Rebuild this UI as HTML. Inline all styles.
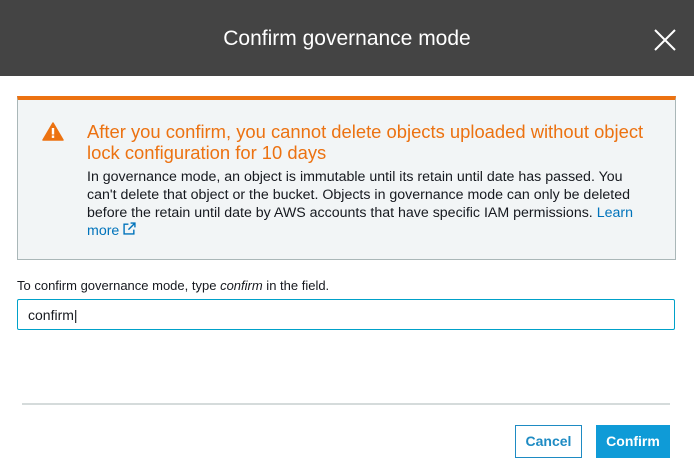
<!DOCTYPE html>
<html><head><style>
*{margin:0;padding:0;box-sizing:border-box}
body{width:694px;height:476px;background:#fff;font-family:"Liberation Sans",Arial,sans-serif;position:relative;overflow:hidden}
.hd{position:absolute;left:0;top:0;width:694px;height:76px;background:#444444;color:#fff;font-size:21px;text-align:center;line-height:78px}
.x{position:absolute;right:18px;top:29px}
.al{position:absolute;left:17px;top:96px;width:659px;height:164px;background:#f2f5f6;border:1px solid #aab7b8;border-top:4px solid #ec7211}
.al svg{position:absolute;left:24px;top:22px}
.t{position:absolute;left:69px;top:21px;width:570px;color:#ec7211;font-size:18.4px;line-height:21px}
.b{position:absolute;left:69px;top:68px;width:550px;color:#16191f;font-size:14.2px;line-height:18px}
a{color:#0073bb;text-decoration:none}
.lb{position:absolute;left:17px;top:278px;font-size:13px;color:#16191f}
.in{position:absolute;left:17px;top:299px;width:658px;height:31px;border:1px solid #00a1c9;border-radius:2px;font-size:14px;padding:7px 10px;color:#16191f}
.dv{position:absolute;left:22px;top:403px;width:648px;height:2px;background:#d5dbdb}
.btn{position:absolute;top:425px;height:33px;font-size:14px;font-weight:bold;line-height:31px;text-align:center}
.c{left:515px;width:67px;border:1px solid #1e8bc3;color:#1e8bc3;background:#fff}
.k{left:596px;width:74px;background:#0f9bd7;color:#fff;line-height:33px}
</style></head><body>
<div class="hd">Confirm governance mode</div>
<svg class="x" width="22" height="22" viewBox="0 0 22 22"><path d="M1 1L21 21M21 1L1 21" stroke="#fff" stroke-width="2"/></svg>
<div class="al">
<svg width="22" height="19" viewBox="0 0 22 19"><path d="M11 1L21 18H1Z" fill="#ec7211" stroke="#ec7211" stroke-linejoin="round" stroke-width="1.5"/><rect x="9.8" y="6" width="2.4" height="6.5" fill="#fff"/><rect x="9.8" y="13.5" width="2.4" height="2.4" fill="#fff"/></svg>
<div class="t">After you confirm, you cannot delete objects uploaded without object lock configuration for 10 days</div>
<div class="b">In governance mode, an object is immutable until its retain until date has passed. You can't delete that object or the bucket. Objects in governance mode can only be deleted before the retain until date by AWS accounts that have specific IAM permissions. <a>Learn more <svg style="position:static" width="13" height="13" viewBox="0 0 12 12"><path d="M5 2H1V11H10V7M7 1H11V5M11 1L5 7" stroke="#0073bb" fill="none" stroke-width="1.3"/></svg></a></div>
</div>
<div class="lb">To confirm governance mode, type <i>confirm</i> in the field.</div>
<div class="in">confirm|</div>
<div class="dv"></div>
<div class="btn c">Cancel</div>
<div class="btn k">Confirm</div>
</body></html>
